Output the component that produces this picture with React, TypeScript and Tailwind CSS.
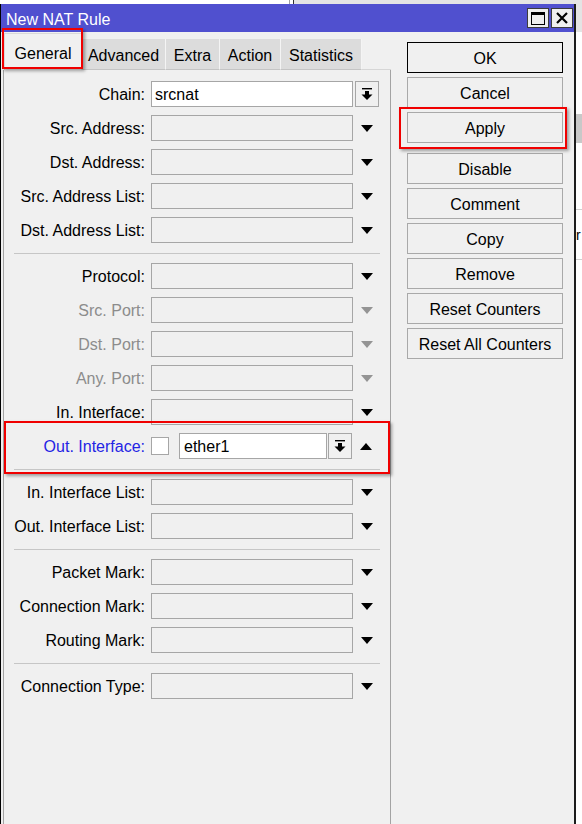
import React from 'react';

type Trail = 'drop' | 'dropOff' | 'button' | 'none';

const DownTri = ({ off }: { off?: boolean }) => (
  <svg width="12" height="7" viewBox="0 0 12 7">
    <polygon points="0,0 12,0 6,7" fill={off ? '#949494' : '#000'} />
  </svg>
);

const UpTri = () => (
  <svg width="12" height="7" viewBox="0 0 12 7">
    <polygon points="0,7 12,7 6,0" fill="#000" />
  </svg>
);

const BarArrow = () => (
  <svg width="12" height="13" viewBox="0 0 12 13">
    <rect x="1" y="0" width="10" height="1.4" fill="#000" />
    <rect x="4" y="3" width="4" height="4" fill="#000" />
    <polygon points="0.5,6.5 11.5,6.5 6,12" fill="#000" />
  </svg>
);

const PickButton = () => (
  <div className="w-[24px] h-[26px] border border-[#a6a6a6] bg-[#f0f0f0] flex items-center justify-center">
    <BarArrow />
  </div>
);

const Row = ({ label, value, trail, tone }: { label: string; value?: string; trail: Trail; tone?: 'off' }) => (
  <div className="flex items-center h-[26px]">
    <div
      className={`w-[142px] text-right pr-[1px] pt-[2px] whitespace-nowrap ${
        tone === 'off' ? 'text-[#8c8c8c]' : 'text-black'
      }`}
    >
      {label}
    </div>
    <div
      className={`ml-[5px] w-[202px] h-[26px] border border-[#a6a6a6] flex items-center pl-[3px] pt-[2px] ${
        value ? 'bg-white' : 'bg-[#f0f0f0]'
      }`}
    >
      {value}
    </div>
    <div className="ml-[2px] w-[24px] flex items-center justify-center">
      {trail === 'button' && <PickButton />}
      {trail === 'drop' && <DownTri />}
      {trail === 'dropOff' && <DownTri off />}
    </div>
  </div>
);

const Sep = () => <div className="mt-[10px] mb-[9px] ml-[10px] w-[366px] h-px bg-[#c6c6c6]" />;

const tabs = [
  { name: 'Advanced', w: 'w-[84px]' },
  { name: 'Extra', w: 'w-[54px]' },
  { name: 'Action', w: 'w-[61px]' },
  { name: 'Statistics', w: 'w-[81px]' },
];

const actions = ['Cancel', 'Apply', 'Disable', 'Comment', 'Copy', 'Remove', 'Reset Counters', 'Reset All Counters'];

export default function App() {
  return (
    <div className="w-[582px] h-[824px] overflow-hidden relative bg-white font-['Liberation_Sans',Arial,sans-serif] text-[16px] text-black leading-none">
      {/* window behind, top strip */}
      <div className="h-[4px] flex">
        <div className="w-[289px] bg-white" />
        <div className="w-px bg-[#a0a0a0]" />
        <div className="w-[3px] bg-white" />
        <div className="w-px bg-[#303030]" />
        <div className="flex-1 bg-[#e4e4e4]" />
      </div>

      <div className="flex h-[820px]">
        {/* dialog */}
        <div className="w-[576px] flex flex-col border-l border-black border-r-2 border-r-[#1c1c1c] bg-[#f0f0f0]">
          {/* title bar */}
          <div className="h-[28px] bg-[#5050cf] flex items-center justify-between pl-[5px] pr-[1px]">
            <span className="text-white mt-[4px]">New NAT Rule</span>
            <div className="flex gap-[2px]">
              <div className="w-[22px] h-[20px] bg-[#efefef] border border-[#3c3c3c] flex items-center justify-center">
                <svg width="14" height="13" viewBox="0 0 14 13">
                  <rect x="0.5" y="0.5" width="13" height="12" fill="none" stroke="#000" />
                  <rect x="0" y="0" width="14" height="3" fill="#000" />
                </svg>
              </div>
              <div className="w-[22px] h-[20px] bg-[#efefef] border border-[#3c3c3c] flex items-center justify-center">
                <svg width="12" height="12" viewBox="0 0 12 12">
                  <path d="M1 1 L11 11 M11 1 L1 11" stroke="#000" strokeWidth="2.2" />
                </svg>
              </div>
            </div>
          </div>

          <div className="flex flex-1">
            {/* left: tabs + form */}
            <div className="w-[390px] flex flex-col">
              <div className="h-[38px] flex items-end">
                <div className="ml-[3px] w-[78px] h-[37px] bg-[#f0f0f0] border-l border-t border-r border-[#d8d8d8] flex items-center justify-center pt-[4px]">
                  General
                </div>
                {tabs.map((t) => (
                  <div
                    key={t.name}
                    className={`${t.w} h-[31px] bg-[#dcdcdc] border-r border-[#f4f4f4] border-b border-b-[#c4c4c4] flex items-center justify-center pt-[4px]`}
                  >
                    {t.name}
                  </div>
                ))}
                <div className="flex-1 border-b border-[#d6d6d6]" />
              </div>

              <div className="ml-[2px] w-[388px] flex-1 border-l border-r border-[#a3a3a3] pt-[11px] flex flex-col">
                <div className="flex flex-col gap-[8px]">
                  <Row label="Chain:" value="srcnat" trail="button" />
                  <Row label="Src. Address:" trail="drop" />
                  <Row label="Dst. Address:" trail="drop" />
                  <Row label="Src. Address List:" trail="drop" />
                  <Row label="Dst. Address List:" trail="drop" />
                </div>
                <Sep />
                <div className="flex flex-col gap-[8px]">
                  <Row label="Protocol:" trail="drop" />
                  <Row label="Src. Port:" trail="dropOff" tone="off" />
                  <Row label="Dst. Port:" trail="dropOff" tone="off" />
                  <Row label="Any. Port:" trail="dropOff" tone="off" />
                  <Row label="In. Interface:" trail="drop" />
                  <div className="flex items-center h-[26px]">
                    <div className="w-[142px] text-right pr-[1px] pt-[2px] whitespace-nowrap text-[#2424e4]">
                      Out. Interface:
                    </div>
                    <div className="ml-[5px] w-[18px] h-[18px] bg-white border border-[#a6a6a6]" />
                    <div className="ml-[10px] w-[148px] h-[26px] bg-white border border-[#a6a6a6] flex items-center pl-[4px] pt-[2px]">
                      ether1
                    </div>
                    <div className="ml-[1px]">
                      <PickButton />
                    </div>
                    <div className="ml-[2px] w-[24px] flex items-center justify-center">
                      <UpTri />
                    </div>
                  </div>
                </div>
                <Sep />
                <div className="flex flex-col gap-[8px]">
                  <Row label="In. Interface List:" trail="drop" />
                  <Row label="Out. Interface List:" trail="drop" />
                </div>
                <Sep />
                <div className="flex flex-col gap-[8px]">
                  <Row label="Packet Mark:" trail="drop" />
                  <Row label="Connection Mark:" trail="drop" />
                  <Row label="Routing Mark:" trail="drop" />
                </div>
                <Sep />
                <Row label="Connection Type:" trail="drop" />
              </div>
            </div>

            {/* right: action buttons */}
            <div className="flex-1 pl-[16px] pt-[10px] flex flex-col gap-[4px]">
              <div className="w-[156px] h-[31px] border border-black bg-[#f0f0f0] flex items-center justify-center pt-[2px]">
                OK
              </div>
              {actions.map((a) => (
                <div
                  key={a}
                  className={`w-[156px] h-[31px] border border-[#a9a9a9] bg-[#f0f0f0] flex items-center justify-center pt-[2px] ${
                    a === 'Disable' ? 'mt-[6px]' : ''
                  }`}
                >
                  {a}
                </div>
              ))}
            </div>
          </div>
        </div>

        {/* window behind, right strip */}
        <div className="flex-1 flex flex-col bg-white">
          <div className="h-[28px] bg-[#e4e4e4]" />
          <div className="h-[82px] bg-white" />
          <div className="h-[29px] bg-[#c8c8c8]" />
          <div className="h-[67px] bg-white border-b border-[#d0d0d0]" />
          <div className="h-[50px] bg-white border-b border-[#d0d0d0] flex items-center text-[14px]">r</div>
          <div className="flex-1 bg-white" />
        </div>
      </div>

      {/* highlight boxes */}
      <div className="absolute left-[2px] top-[28px] w-[81px] h-[41px] border-2 border-[#f00000] shadow-[2px_2px_3px_rgba(0,0,0,0.35)]" />
      <div className="absolute left-[399px] top-[107px] w-[168px] h-[42px] border-2 border-[#f00000] shadow-[2px_2px_3px_rgba(0,0,0,0.35)]" />
      <div className="absolute left-[4px] top-[421px] w-[386px] h-[53px] border-2 border-[#f00000] shadow-[2px_2px_3px_rgba(0,0,0,0.35)]" />
    </div>
  );
}
